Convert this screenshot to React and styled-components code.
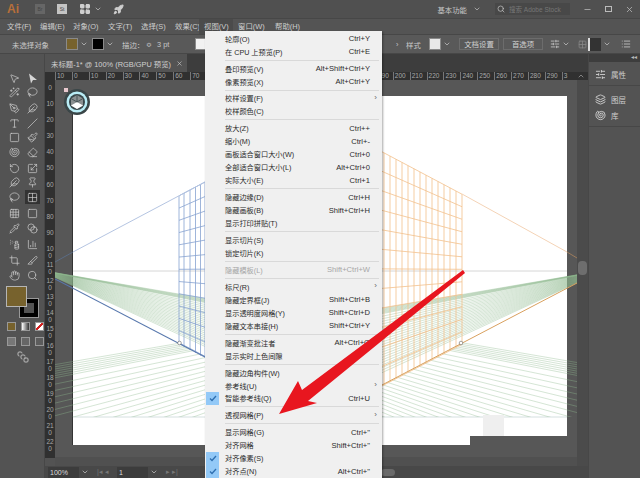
import React from "react";
import styled, { createGlobalStyle } from "styled-components";
import {
  MousePointer2, Wand2, Lasso, PenTool, Feather, Type, Slash, Square, Paintbrush, Eraser,
  RotateCcw, Scaling, Pin, Shell, Grid3x3, Grid2x2, SquareStack, Pipette, Blend, SprayCan,
  ChartColumn, Crop, Slice, Hand, Search, ChevronDown, ChevronUp, Rocket, LayoutGrid,
  Layers, Minus, X, List, SlidersHorizontal,
} from "lucide-react";

const FONT = `"Liberation Sans", "Noto Sans CJK SC", sans-serif`;

const Global = createGlobalStyle`
  html, body { margin: 0; padding: 0; background: #535353; }
  * { box-sizing: border-box; }
`;

const Page = styled.div`
  position: relative;
  width: 640px;
  height: 478px;
  overflow: hidden;
  display: flex;
  flex-direction: column;
  background: #535353;
  color: #c8c8c8;
  font-family: ${FONT};
  font-size: 7.4px;
`;

/* title bar */
const TitleBar = styled.div`
  height: 18px;
  flex: none;
  display: flex;
  align-items: center;
  padding-left: 7px;
  background: #505050;
`;
const Logo = styled.span`
  width: 28px;
  font-size: 12px;
  font-weight: bold;
  color: #b86f3a;
`;
const AppBadge = styled.span`
  width: 10px;
  height: 10px;
  margin-right: 12px;
  font-size: 5px;
  line-height: 10px;
  text-align: center;
  background: ${(p) => (p.$dim ? "#666" : "#c4c4c4")};
  color: #444;
`;
const TitleIcons = styled.div`
  display: flex;
  align-items: center;
  gap: 3px;
  color: #cfcfcf;
`;
const TitleRight = styled.div`
  margin-left: auto;
  display: flex;
  align-items: center;
`;
const Workspace = styled.span`
  display: flex;
  align-items: center;
  gap: 6px;
  margin-right: 14px;
`;
const StockSearch = styled.div`
  width: 75px;
  height: 12px;
  display: flex;
  align-items: center;
  gap: 4px;
  padding-left: 2px;
  margin-right: 7px;
  background: #484848;
  color: #777;
  font-size: 6.5px;
  white-space: nowrap;
`;
const WinButton = styled.span`
  width: 21px;
  display: flex;
  justify-content: center;
  color: #bbb;
`;
const Restore = styled.span`
  width: 7px;
  height: 6px;
  border: 1px solid #bbb;
`;

/* menu bar */
const MenuBar = styled.div`
  height: 16px;
  flex: none;
  display: flex;
  align-items: center;
  padding-left: 2px;
  background: #545454;
  border-top: 1px solid #474747;
`;
const MenuTitle = styled.span`
  width: ${(p) => p.$w}px;
  height: 15px;
  padding-left: 5px;
  line-height: 15px;
  white-space: nowrap;
  color: #cdcdcd;
  background: ${(p) => (p.$open ? "#4b4b4b" : "transparent")};
`;

/* control bar */
const ControlBar = styled.div`
  height: 20px;
  flex: none;
  display: flex;
  align-items: center;
  padding-left: 12px;
  background: #595959;
  border-top: 1px solid #474747;
  border-bottom: 1px solid #474747;
`;
const ControlLabel = styled.span`
  width: ${(p) => p.$w}px;
  flex: none;
  white-space: nowrap;
`;
const Swatch = styled.span`
  display: block;
  width: 12px;
  height: 12px;
  flex: none;
  border: 1px solid #8a8a8a;
  background: ${(p) => p.$c};
`;
const Caret = styled(ChevronDown)`
  flex: none;
  width: 8px;
  height: 8px;
  margin: 0 ${(p) => p.$gap || 2}px 0 2px;
  color: #d0d0d0;
`;
const ControlButton = styled.span`
  width: ${(p) => p.$w}px;
  height: 12px;
  flex: none;
  margin-right: ${(p) => p.$gap}px;
  line-height: 11px;
  text-align: center;
  border: 1px solid #6c6c6c;
  color: #d2d2d2;
`;
const ActiveTool = styled.span`
  width: 13px;
  height: 13px;
  flex: none;
  margin-left: 1px;
  background: #333;
  border-left: 2px solid #ddd;
`;

/* work area */
const Main = styled.div`
  flex: 1;
  min-height: 0;
  display: flex;
`;
const ToolPanel = styled.div`
  width: 45px;
  flex: none;
  padding: 17px 0 0 5px;
  background: #535353;
  border-right: 1px solid #474747;
`;
const ToolGroup = styled.div`
  display: grid;
  grid-template-columns: 18px 18px;
  grid-auto-rows: 14.4px;
  justify-items: center;
  align-items: center;
  margin-bottom: 2px;
`;
const ToolCell = styled.span`
  width: 15px;
  height: 14px;
  display: flex;
  align-items: center;
  justify-content: center;
  color: #cfcfcf;
  background: ${(p) => (p.$active ? "#333" : "transparent")};
`;
const ColorWell = styled.div`
  position: relative;
  width: 33px;
  height: 32px;
  margin: 4px 0 0 1px;
`;
const FillBox = styled.span`
  position: absolute;
  left: 0;
  top: 0;
  z-index: 1;
  width: 21px;
  height: 21px;
  background: #77622d;
  border: 1px solid #b5b5b5;
`;
const StrokeBox = styled.span`
  position: absolute;
  right: 0;
  bottom: 0;
  width: 20px;
  height: 20px;
  border: 5px solid #000;
  outline: 1px solid #999;
  outline-offset: -1px;
`;
const ModeRow = styled.div`
  display: flex;
  gap: 5px;
  margin: ${(p) => p.$top}px 0 0 2px;
`;
const ModeSwatch = styled.span`
  width: 9px;
  height: 9px;
  border: 1px solid #999;
  background: ${(p) => p.$bg};
`;
const ScreenMode = styled(SquareStack)`
  display: block;
  margin: 5px 0 0 12px;
  color: #bbb;
`;

const DocArea = styled.div`
  flex: 1;
  min-width: 0;
  display: flex;
  flex-direction: column;
`;
const TabStrip = styled.div`
  height: 18px;
  flex: none;
  background: #3d3d3d;
`;
const DocTab = styled.div`
  width: 142px;
  height: 18px;
  display: flex;
  align-items: center;
  justify-content: space-between;
  padding: 0 4px 0 6px;
  white-space: nowrap;
  background: #535353;
  color: #d0d0d0;
`;
const RulerX = styled.div`
  height: 8px;
  flex: none;
  display: flex;
  padding-left: 10px;
  background: #303030;
  color: #a8a8a8;
  font-size: 6.5px;
  line-height: 8px;
  overflow: hidden;
`;
const RulerTick = styled.span`
  width: 16.9px;
  flex: none;
  padding-left: 1px;
  border-left: 1px solid #777;
`;
const CanvasRow = styled.div`
  flex: 1;
  min-height: 0;
  display: flex;
`;
const RulerY = styled.div`
  width: 10px;
  flex: none;
  align-self: flex-start;
  height: 378px;
  padding-top: 4px;
  background: #303030;
  color: #a8a8a8;
  font-size: 6.5px;
  overflow: hidden;
`;
const RulerYTick = styled.div`
  height: 16.1px;
  line-height: 7px;
  text-align: center;
  word-break: break-all;
`;
const StageColumn = styled.div`
  flex: 1;
  min-width: 0;
  display: flex;
  flex-direction: column;
`;
const Stage = styled.div`
  position: relative;
  flex: 1;
  min-height: 0;
  padding: 16px 0 0 18px;
  background: #575757;
`;
const ScrollX = styled.div`
  height: 9px;
  flex: none;
  background: #505050;
`;
const Artboard = styled.div`
  width: 494px;
  height: 349px;
  background: #fff;
  box-shadow: -1px 0 0 #333;
`;
const Art = styled.svg`
  position: absolute;
  left: 0;
  top: 0;
`;
const ScrollY = styled.div`
  position: relative;
  width: 11px;
  flex: none;
  background: #4b4b4b;
`;
const ScrollThumb = styled.span`
  position: absolute;
  left: 1px;
  top: 181px;
  width: 9px;
  height: 14px;
  border-radius: 4px;
  background: #6e6e6e;
`;
const ScrollUp = styled(ChevronUp)`
  flex: none;
  margin-left: -2px;
  color: #aaa;
`;
const StatusBar = styled.div`
  height: 12px;
  flex: none;
  display: flex;
  align-items: center;
  padding-left: 3px;
  background: #484848;
  font-size: 7px;
  color: #ddd;
`;
const ZoomBox = styled.span`
  width: 31px;
  height: 11px;
  padding-left: 2px;
  line-height: 11px;
  background: #3c3c3c;
`;
const NavGlyph = styled.span`
  width: ${(p) => p.$w}px;
  color: #777;
`;
const StatusThumb = styled.span`
  width: 14px;
  height: 7px;
  margin-left: 195px;
  border-radius: 4px;
  background: #6a6a6a;
`;

/* right dock */
const Dock = styled.div`
  width: 52px;
  flex: none;
  background: #535353;
  border-left: 1px solid #474747;
`;
const DockTop = styled.div`
  height: 8px;
  padding-right: 3px;
  text-align: right;
  line-height: 7px;
  font-size: 6px;
  color: #bbb;
  background: #3d3d3d;
`;
const DockGroup = styled.div`
  display: flex;
  flex-direction: column;
  padding: ${(p) => p.$pad}px 0 5px 6px;
  gap: 5px;
  border-bottom: 1px solid #474747;
`;
const DockItem = styled.div`
  display: flex;
  align-items: center;
  gap: 5px;
  height: 11px;
  font-size: 7.5px;
  color: #d0d0d0;
`;

/* view menu */
const ViewMenu = styled.div`
  position: absolute;
  left: 205px;
  top: 31px;
  width: 177px;
  height: 450px;
  padding: 1.2px 1px 0;
  background: #f0f0f0;
  box-shadow: 1px 1px 2px rgba(0, 0, 0, 0.35);
  color: #2b2b2b;
`;
const MenuRow = styled.div`
  position: relative;
  height: 12.96px;
  display: flex;
  align-items: center;
  padding: 0 11px 0 19px;
  white-space: nowrap;
  font-size: 7.2px;
  color: ${(p) => (p.$off ? "#a6a6a6" : "#2b2b2b")};
`;
const Shortcut = styled.span`
  margin-left: auto;
  font-size: 7.6px;
`;
const SubArrow = styled.span`
  position: absolute;
  right: 4px;
  top: 1px;
  font-size: 8px;
  color: #666;
`;
const CheckMark = styled.span`
  position: absolute;
  left: 0;
  top: 0;
  width: 13px;
  height: 12.96px;
  display: flex;
  align-items: center;
  justify-content: center;
  background: #93c9f7;
`;
const Separator = styled.div`
  height: 1px;
  margin: 1.5px 2px 1.5px 19px;
  background: #d9d9d9;
`;
const RedArrow = styled.svg`
  position: absolute;
  left: 0;
  top: 0;
  pointer-events: none;
`;

const menuItems = [
  ["轮廓(O)", "Ctrl+Y"],
  ["在 CPU 上预览(P)", "Ctrl+E"],
  null,
  ["叠印预览(V)", "Alt+Shift+Ctrl+Y"],
  ["像素预览(X)", "Alt+Ctrl+Y"],
  null,
  ["校样设置(F)", "", { sub: true }],
  ["校样颜色(C)", ""],
  null,
  ["放大(Z)", "Ctrl++"],
  ["缩小(M)", "Ctrl+-"],
  ["画板适合窗口大小(W)", "Ctrl+0"],
  ["全部适合窗口大小(L)", "Alt+Ctrl+0"],
  ["实际大小(E)", "Ctrl+1"],
  null,
  ["隐藏边缘(D)", "Ctrl+H"],
  ["隐藏画板(B)", "Shift+Ctrl+H"],
  ["显示打印拼贴(T)", ""],
  null,
  ["显示切片(S)", ""],
  ["锁定切片(K)", ""],
  null,
  ["隐藏模板(L)", "Shift+Ctrl+W", { off: true }],
  null,
  ["标尺(R)", "", { sub: true }],
  ["隐藏定界框(J)", "Shift+Ctrl+B"],
  ["显示透明度网格(Y)", "Shift+Ctrl+D"],
  ["隐藏文本串接(H)", "Shift+Ctrl+Y"],
  null,
  ["隐藏渐变批注者", "Alt+Ctrl+G"],
  ["显示实时上色间隙", ""],
  null,
  ["隐藏边角构件(W)", ""],
  ["参考线(U)", "", { sub: true }],
  ["智能参考线(Q)", "Ctrl+U", { check: true }],
  null,
  ["透视网格(P)", "", { sub: true }],
  null,
  ["显示网格(G)", "Ctrl+\""],
  ["对齐网格", "Shift+Ctrl+\""],
  ["对齐像素(S)", "", { check: true }],
  ["对齐点(N)", "Alt+Ctrl+\"", { check: true }],
];

const topMenus = [
  ["文件(F)", 33], ["编辑(E)", 33], ["对象(O)", 35], ["文字(T)", 33], ["选择(S)", 34], ["效果(C)", 29],
  ["视图(V)", 34, true], ["窗口(W)", 37], ["帮助(H)", 40],
];

// custom glyph for the filled selection arrow
const SolidArrow = () => (
  <svg width="11" height="11" viewBox="0 0 11 11"><path d="M2 0.5 L10 7 L6 7 L4 10.5 Z" fill="#d6d6d6" /></svg>
);

const toolGroups = [
  [[MousePointer2], [SolidArrow], [Wand2], [Lasso]],
  [[PenTool], [Feather], [Type], [Slash], [Square], [Paintbrush], [Shell], [Eraser]],
  [[RotateCcw], [Scaling], [Feather], [Pin], [Lasso], [Grid2x2, true]],
  [[Grid3x3], [Square], [Pipette], [Blend]],
  [[SprayCan], [ChartColumn]],
  [[Crop], [Slice], [Hand], [Search]],
];

// labels under the open menu can't be seen, those ticks stay empty
const rulerXLabels = [10, 0, 10, 20, 30, 40, 50, 60, 70, "", "", "", "", "", "", "", "", "", "", 190, 200, 210, 220, 230, 240, 250, 260, 270, 280, 290, 3];
const rulerYLabels = [0, 10, 20, 30, 40, 50, 60, 70, 80, 90, 100, 110, 120, 130, 140, 150, 160, 170, 180, 190, 200, 210, 220];

const LVP = [39, 270];
const RVP = [605, 270];

// perspective grid: the picture content, in page coordinates
const range = (n) => Array.from({ length: n }, (_, i) => i);
const slopes = range(30).map((i) => (i < 6 ? 0.172 + 0.004 * i : 0.196 + 0.0115 * (i - 6)));
const bluePlaneX = [179, 184, 190, 195.5, 200.5, 205];
const orangePlaneX = [384, 390, 396, 402, 408, 414, 420, 426, 432, 438, 444, 450, 456, 462];

const edgeY = (vp, k, x) => vp[1] + k * Math.abs(x - vp[0]);

const PerspectiveArt = () => (
  <Art width="522" height="377" viewBox="55 80 522 377">
    <defs>
      <clipPath id="fanLeft"><polygon points="55,250 320,250 320,417 462,343 578,283 578,417 55,417" /></clipPath>
      <clipPath id="fanRight"><polygon points="578,250 322,250 322,417 179,343 55,280 55,417 578,417" /></clipPath>
    </defs>
    <line x1="73" y1="271" x2="567" y2="271" stroke="#d6d6d6" />
    <line x1="73" y1="417" x2="567" y2="417" stroke="#d5e0e0" />
    <g clipPath="url(#fanLeft)" stroke="#8fb98f" strokeOpacity="0.5" strokeWidth="0.75">
      {slopes.map((k) => (
        <line key={k} x1={LVP[0]} y1={LVP[1]} x2="600" y2={LVP[1] + k * 561} />
      ))}
    </g>
    <g clipPath="url(#fanRight)" stroke="#8fb98f" strokeOpacity="0.5" strokeWidth="0.75">
      {slopes.map((k) => (
        <line key={k} x1={RVP[0]} y1={RVP[1]} x2="40" y2={RVP[1] + k * 565} />
      ))}
    </g>
    <g stroke="#86a2d0" strokeWidth="0.8" fill="none">
      {bluePlaneX.map((x) => (
        <line key={x} x1={x} y1={edgeY(LVP, 0.53, x)} x2={x} y2={edgeY(LVP, -0.53, x)} />
      ))}
      {range(13).map((i) => {
        const k = -0.53 + (1.05 * i) / 12;
        return <line key={i} x1="179" y1={LVP[1] + k * 140} x2="205" y2={LVP[1] + k * 166} />;
      })}
    </g>
    <line x1="55" y1="262" x2="73" y2="252" stroke="#5e7fb2" strokeOpacity="0.5" />
    <line x1="73" y1="252" x2="205" y2="182" stroke="#b5c5e2" />
    <line x1="55" y1="279" x2="205" y2="357" stroke="#5878ad" strokeWidth="1.1" />
    <g stroke="#f3c08c" strokeWidth="0.8">
      {orangePlaneX.map((x) => (
        <line key={x} x1={x} y1={edgeY(RVP, -0.53, x)} x2={x} y2={edgeY(RVP, 0.52, x)} />
      ))}
      {range(13).map((i) => {
        const k = -0.53 + (1.05 * i) / 12;
        return <line key={i} x1="382" y1={RVP[1] + k * 223} x2="462" y2={RVP[1] + k * 143} />;
      })}
    </g>
    <line x1="462" y1="194" x2="567" y2="252" stroke="#f4d3b6" />
    <line x1="567" y1="252" x2="577" y2="258" stroke="#b98a5e" strokeOpacity="0.7" />
    <line x1="382" y1="385" x2="577" y2="283" stroke="#d9a15f" strokeWidth="1" />
    <circle cx="179.5" cy="343" r="1.8" fill="#fff" stroke="#666" strokeWidth="0.6" />
    <circle cx="461" cy="343" r="1.8" fill="#fff" stroke="#666" strokeWidth="0.6" />
    {/* smudged patch left in the bottom right of the screenshot */}
    <rect x="483" y="415" width="21" height="21" fill="#efefef" />
    <rect x="470" y="436" width="97" height="9" fill="#575757" />
    {/* perspective grid widget */}
    <circle cx="77" cy="102" r="13" fill="#3a4648" />
    <rect x="64" y="88" width="4" height="4" fill="#e9c9cf" />
    <circle cx="77" cy="102" r="10.5" fill="#b9edf6" />
    <circle cx="77" cy="102" r="8" fill="#39474a" />
    <path d="M77 95 L83 98.5 L83 105.5 L77 109 L71 105.5 L71 98.5 Z" fill="#8a8f90" />
    <path d="M77 102 L83 105.5 L77 109 L71 105.5 Z" fill="#fff" />
    <path d="M77 102 L77 95 M77 102 L71 98.5 M77 102 L83 98.5" stroke="#39474a" strokeWidth="0.8" />
  </Art>
);

export default function App() {
  return (
    <Page>
      <Global />
      <TitleBar>
        <Logo>Ai</Logo>
        <AppBadge $dim>Br</AppBadge>
        <AppBadge>St</AppBadge>
        <TitleIcons>
          <LayoutGrid size={12} fill="#cfcfcf" />
          <ChevronDown size={8} />
          <Rocket size={11} fill="#cfcfcf" style={{ marginLeft: 8 }} />
        </TitleIcons>
        <TitleRight>
          <Workspace>基本功能 <ChevronDown size={8} /></Workspace>
          <StockSearch><Search size={8} color="#ccc" />搜索 Adobe Stock</StockSearch>
          <WinButton><Minus size={9} /></WinButton>
          <WinButton><Restore /></WinButton>
          <WinButton><X size={9} /></WinButton>
        </TitleRight>
      </TitleBar>

      <MenuBar>
        {topMenus.map(([label, w, open]) => (
          <MenuTitle key={label} $w={w} $open={open}>{label}</MenuTitle>
        ))}
      </MenuBar>

      <ControlBar>
        <ControlLabel $w={54}>未选择对象</ControlLabel>
        <Swatch $c="#77622d" />
        <Caret $gap={4} />
        <Swatch $c="#000" />
        <Caret $gap={8} />
        <ControlLabel $w={24}>描边：</ControlLabel>
        <ControlLabel $w={11}>≎</ControlLabel>
        <ControlLabel $w={38}>3 pt</ControlLabel>
        <ControlLabel $w={201}><Swatch $c="#f2f2f2" /></ControlLabel>
        <ControlLabel $w={10}>›</ControlLabel>
        <ControlLabel $w={23}>样式</ControlLabel>
        <Swatch $c="#e9e9e9" />
        <Caret $gap={8} />
        <ControlButton $w={40} $gap={4}>文档设置</ControlButton>
        <ControlButton $w={40} $gap={7}>首选项</ControlButton>
        <SlidersHorizontal size={10} />
        <Caret $gap={8} />
        <Grid2x2 size={9} color="#888" />
        <ActiveTool />
        <Caret $gap={10} />
        <List size={10} />
      </ControlBar>

      <Main>
        <ToolPanel>
          {toolGroups.map((group, g) => (
            <ToolGroup key={g}>
              {group.map(([Icon, active], i) => (
                <ToolCell key={i} $active={active}><Icon size={11} strokeWidth={1.5} /></ToolCell>
              ))}
            </ToolGroup>
          ))}
          <ColorWell>
            <FillBox />
            <StrokeBox />
          </ColorWell>
          <ModeRow $top={4}>
            <ModeSwatch $bg="#77622d" />
            <ModeSwatch $bg="linear-gradient(90deg, #fff, #333)" />
            <ModeSwatch $bg="linear-gradient(135deg, #fff 42%, #d02020 42%, #d02020 58%, #fff 58%)" />
          </ModeRow>
          <ModeRow $top={6}>
            <ModeSwatch $bg="#777" />
            <ModeSwatch $bg="#666" />
            <ModeSwatch $bg="#5c5c5c" />
          </ModeRow>
          <ScreenMode size={12} />
        </ToolPanel>

        <DocArea>
          <TabStrip>
            <DocTab>未标题-1* @ 100% (RGB/GPU 预览) <X size={7} /></DocTab>
          </TabStrip>
          <RulerX>
            {rulerXLabels.map((n, i) => <RulerTick key={i}>{n}</RulerTick>)}
            <ScrollUp size={8} />
          </RulerX>
          <CanvasRow>
            <RulerY>
              {rulerYLabels.map((n) => <RulerYTick key={n}>{n}</RulerYTick>)}
            </RulerY>
            <StageColumn>
              <Stage>
                <Artboard />
                <PerspectiveArt />
              </Stage>
              <ScrollX />
            </StageColumn>
            <ScrollY><ScrollThumb /></ScrollY>
          </CanvasRow>
          <StatusBar>
            <ZoomBox>100%</ZoomBox>
            <Caret $gap={8} />
            <NavGlyph $w={20}>|◂ ◂</NavGlyph>
            <ZoomBox>1</ZoomBox>
            <Caret $gap={8} />
            <NavGlyph $w={20}>▸ ▸|</NavGlyph>
            <StatusThumb />
          </StatusBar>
        </DocArea>

        <Dock>
          <DockTop>◂◂</DockTop>
          <DockGroup $pad={7}>
            <DockItem><SlidersHorizontal size={11} />属性</DockItem>
          </DockGroup>
          <DockGroup $pad={8}>
            <DockItem><Layers size={11} />图层</DockItem>
            <DockItem><Shell size={11} />库</DockItem>
          </DockGroup>
        </Dock>
      </Main>

      <ViewMenu>
        {menuItems.map((item, i) => {
          if (!item) return <Separator key={i} />;
          const [label, keys, opts = {}] = item;
          return (
            <MenuRow key={i} $off={opts.off}>
              {opts.check && <CheckMark>
                <svg width="8" height="7" viewBox="0 0 8 7"><path d="M1 3.5 L3 5.5 L7 1" fill="none" stroke="#2f6fb0" strokeWidth="1.3" /></svg>
              </CheckMark>}
              {label}
              {keys && <Shortcut>{keys}</Shortcut>}
              {opts.sub && <SubArrow>›</SubArrow>}
            </MenuRow>
          );
        })}
      </ViewMenu>

      <RedArrow width="640" height="478" viewBox="0 0 640 478">
        <path d="M279 414 L298 381 L302 390 L463 270 L465 273 L308 401 L317 403 Z" fill="#e8161f" />
      </RedArrow>
    </Page>
  );
}
